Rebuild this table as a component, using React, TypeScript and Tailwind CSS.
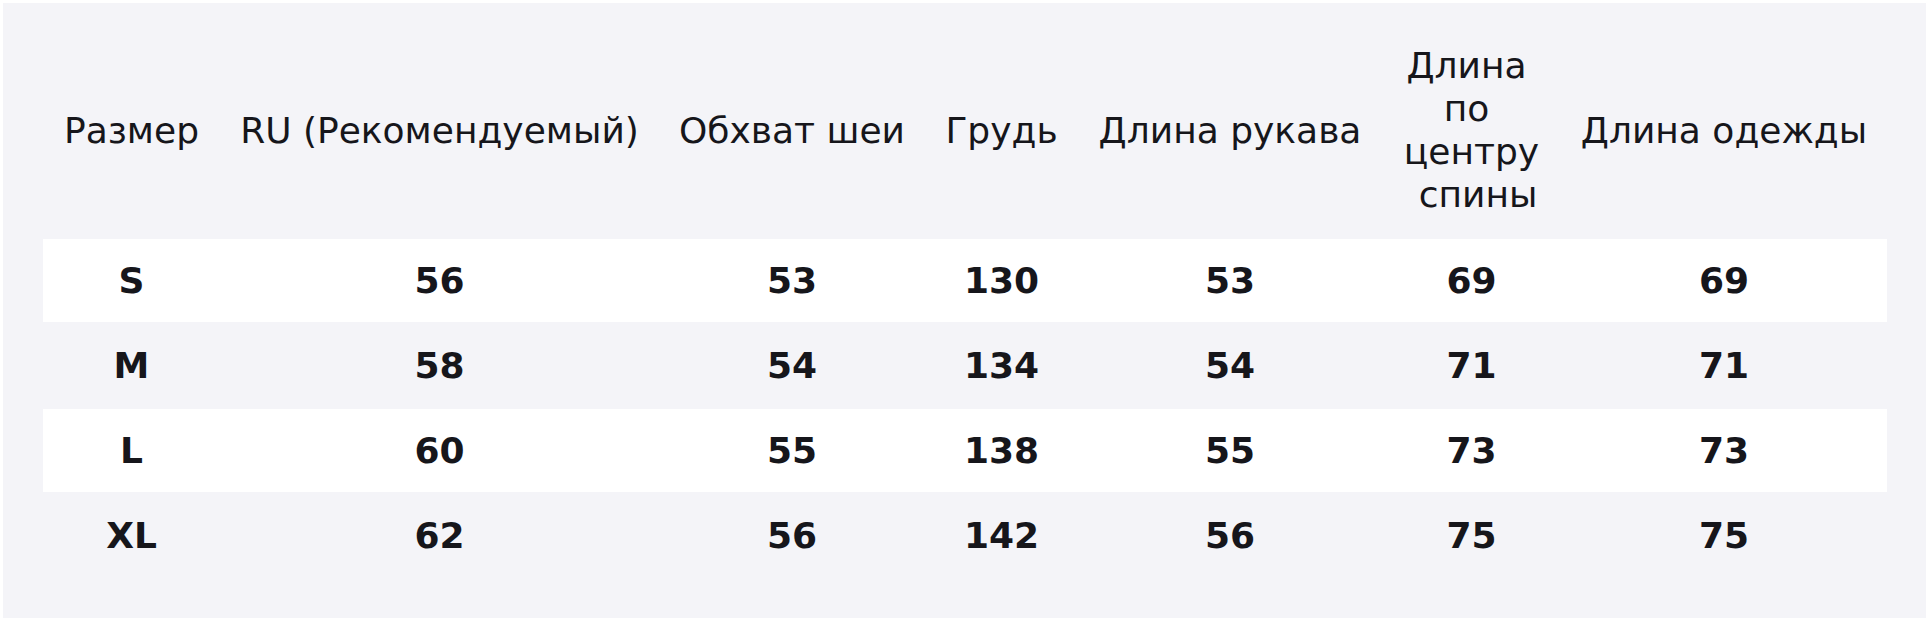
const headers = [
  "Размер",
  "RU (Рекомендуемый)",
  "Обхват шеи",
  "Грудь",
  "Длина рукава",
  null,
  "Длина одежды",
];

const rows = [
  ["S", "56", "53", "130", "53", "69", "69"],
  ["M", "58", "54", "134", "54", "71", "71"],
  ["L", "60", "55", "138", "55", "73", "73"],
  ["XL", "62", "56", "142", "56", "75", "75"],
];

export default function App() {
  return (
    <div className="bg-white pt-[3px] pl-[3px] pr-[4px] pb-[4px] font-['DejaVu_Sans',sans-serif] text-[#16161b]">
      <div className="bg-[#f4f4f8] pl-[40px] pr-[39px] pt-[20px] pb-[41px]">
        {/* header */}
        <div className="grid grid-cols-[177px_439px_266px_153px_304px_179px_326px] h-[214px] mb-[2px] items-center text-center text-[36px] leading-[43px]">
          {headers.map((h, i) =>
            h ? (
              <div key={i} className="whitespace-nowrap">
                {h}
              </div>
            ) : (
              <div key={i} className="flex flex-col items-center">
                <span className="pr-[10px]">Длина</span>
                <span className="pr-[10px]">по</span>
                <span>центру</span>
                <span className="pl-[13px]">спины</span>
              </div>
            )
          )}
        </div>

        {/* size rows */}
        <div className="flex flex-col gap-[2px]">
          {rows.map((r, i) => (
            <div
              key={r[0]}
              className={`grid grid-cols-[177px_439px_266px_153px_304px_179px_326px] h-[83px] items-center text-center text-[36px] font-bold ${
                i % 2 === 0 ? "bg-white" : ""
              }`}
            >
              {r.map((v, j) => (
                <div key={j}>{v}</div>
              ))}
            </div>
          ))}
        </div>
      </div>
    </div>
  );
}
